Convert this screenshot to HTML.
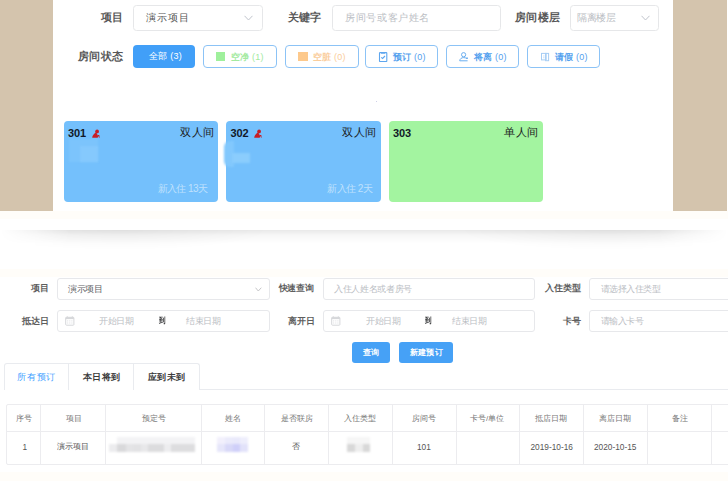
<!DOCTYPE html>
<html><head><meta charset="utf-8">
<style>
*{box-sizing:border-box;margin:0;padding:0}
html,body{width:728px;height:487px;overflow:hidden;background:#fff;font-family:"Liberation Sans",sans-serif;position:relative}
.a{position:absolute}
.t{position:absolute;white-space:nowrap;line-height:1}
</style></head><body>
<div class="a" style="left:0px;top:0px;width:53px;height:211px;background:#d4c4ad"></div>
<div class="a" style="left:673px;top:0px;width:54px;height:211px;background:#d4c4ad"></div>
<div class="a" style="left:0px;top:211px;width:728px;height:8px;background:#fffdf9"></div>
<div class="a" style="left:0px;top:230px;width:728px;height:26px;background:radial-gradient(ellipse 150px 20px at 120px 0, rgba(0,0,0,0.045), rgba(0,0,0,0)), radial-gradient(ellipse 150px 20px at 608px 0, rgba(0,0,0,0.045), rgba(0,0,0,0)), linear-gradient(rgba(0,0,0,0.085), rgba(0,0,0,0.035) 5px, rgba(0,0,0,0) 13px);-webkit-mask-image:linear-gradient(to right, transparent 0, #000 70px, #000 658px, transparent 728px)"></div>
<div class="a" style="left:0px;top:269px;width:728px;height:8px;background:#fffdf9"></div>
<div class="a" style="left:0px;top:472px;width:728px;height:9px;background:#fffdf9"></div>
<div class="t" style="left:100.5px;top:12px;font-size:11px;color:#585858;font-weight:bold;letter-spacing:0.6px">项目</div>
<div class="a" style="left:133px;top:5px;width:130px;height:26px;background:#fff;border:1px solid #e6e7e9;border-radius:3.5px"></div>
<div class="t" style="left:146px;top:13px;font-size:10px;color:#555;letter-spacing:0.85px">演示项目</div>
<svg class="a" style="left:244px;top:15px" width="9" height="6" viewBox="0 0 9 6"><path d="M0.5 0.8 L4.5 5 L8.5 0.8" fill="none" stroke="#c0c4cc" stroke-width="1"/></svg>
<div class="t" style="left:288px;top:12px;font-size:11px;color:#585858;font-weight:bold;letter-spacing:0.2px">关键字</div>
<div class="a" style="left:332px;top:5px;width:169px;height:26px;background:#fff;border:1px solid #e6e7e9;border-radius:3.5px"></div>
<div class="t" style="left:345px;top:13px;font-size:10px;color:#bbbec4;letter-spacing:0.64px">房间号或客户姓名</div>
<div class="t" style="left:515px;top:12px;font-size:11px;color:#585858;font-weight:bold;letter-spacing:0.3px">房间楼层</div>
<div class="a" style="left:570px;top:5px;width:89px;height:26px;background:#fff;border:1px solid #e6e7e9;border-radius:3.5px"></div>
<div class="t" style="left:577px;top:13px;font-size:10px;color:#bbbec4;letter-spacing:-0.3px">隔离楼层</div>
<svg class="a" style="left:641px;top:15px" width="9" height="6" viewBox="0 0 9 6"><path d="M0.5 0.8 L4.5 5 L8.5 0.8" fill="none" stroke="#c0c4cc" stroke-width="1"/></svg>
<div class="t" style="left:78px;top:51px;font-size:11px;color:#585858;font-weight:bold;letter-spacing:0.43px">房间状态</div>
<div class="a" style="left:133px;top:45px;width:62px;height:23px;background:#419ff8;border-radius:4px"></div>
<div class="t" style="left:149px;top:52px;font-size:9px;color:#fff;letter-spacing:0.25px">全部 (3)</div>
<div class="a" style="left:203px;top:45px;width:74px;height:23px;background:#fff;border:1.3px solid #8cc3f6;border-radius:4px"></div>
<div class="a" style="left:216px;top:52px;width:9px;height:9px;background:#9ff09c"></div>
<div class="t" style="left:231px;top:52.5px;font-size:9px;color:#a3eaa0;font-weight:bold;letter-spacing:0.2px">空净 <span style="font-weight:normal">(1)</span></div>
<div class="a" style="left:285px;top:45px;width:74px;height:23px;background:#fff;border:1.3px solid #8cc3f6;border-radius:4px"></div>
<div class="a" style="left:297.5px;top:52px;width:10px;height:9px;background:#fdc98c"></div>
<div class="t" style="left:313px;top:52.5px;font-size:9px;color:#facd9c;font-weight:bold;letter-spacing:0.2px">空脏 <span style="font-weight:normal">(0)</span></div>
<div class="a" style="left:365px;top:45px;width:73px;height:23px;background:#fff;border:1.3px solid #8cc3f6;border-radius:4px"></div>
<svg class="a" style="left:378px;top:51px" width="10" height="11" viewBox="0 0 10 11"><rect x="1.5" y="1.6" width="7.3" height="8.9" rx="0.6" fill="none" stroke="#5ea6ee" stroke-width="1.1"/><rect x="3" y="1" width="4.2" height="1.7" fill="#5ea6ee"/><path d="M3.2 6.3 L4.6 7.5 L7 5" fill="none" stroke="#5ea6ee" stroke-width="1.1"/></svg>
<div class="t" style="left:393px;top:52.5px;font-size:9px;color:#55a1ee;font-weight:bold;letter-spacing:0.2px">预订 <span style="font-weight:normal">(0)</span></div>
<div class="a" style="left:446px;top:45px;width:73px;height:23px;background:#fff;border:1.3px solid #8cc3f6;border-radius:4px"></div>
<svg class="a" style="left:458px;top:51px" width="11" height="11" viewBox="0 0 11 11"><circle cx="5.6" cy="3.7" r="2.1" fill="none" stroke="#6aaef0" stroke-width="1"/><path d="M1.7 9.8 C1.9 7.8 3.5 6.6 5.6 6.6 C7 6.6 8 7 8.6 7.4 M1.7 9.8 H9.6" fill="none" stroke="#6aaef0" stroke-width="1"/><rect x="8" y="6.6" width="2" height="1.2" fill="#5ea6ee"/></svg>
<div class="t" style="left:474px;top:52.5px;font-size:9px;color:#55a1ee;font-weight:bold;letter-spacing:0.2px">将离 <span style="font-weight:normal">(0)</span></div>
<div class="a" style="left:527px;top:45px;width:73px;height:23px;background:#fff;border:1.3px solid #8cc3f6;border-radius:4px"></div>
<svg class="a" style="left:540px;top:52px" width="10" height="10" viewBox="0 0 10 10"><rect x="1.5" y="1.4" width="4.6" height="6.5" fill="none" stroke="#a6cdf4" stroke-width="1"/><rect x="5.6" y="1.4" width="3" height="7.3" fill="none" stroke="#a6cdf4" stroke-width="1"/><path d="M3 4 H4.6 M3 5.8 H4.6" stroke="#c8e0f8" stroke-width="0.9"/></svg>
<div class="t" style="left:555px;top:52.5px;font-size:9px;color:#55a1ee;font-weight:bold;letter-spacing:0.2px">请假 <span style="font-weight:normal">(0)</span></div>
<div class="a" style="left:376px;top:101px;width:1px;height:1px;background:#d0d0e8"></div>
<div class="a" style="left:64px;top:120.5px;width:154px;height:81.3px;background:#74c0fc;border-radius:4px"></div>
<div class="a" style="left:69px;top:139px;width:29px;height:23px;background:#7cc4fc;filter:blur(1.2px)"></div>
<div class="a" style="left:80px;top:146px;width:18px;height:16px;background:#85c9fd;filter:blur(1.2px)"></div>
<div class="t" style="left:68px;top:128px;font-size:11px;color:#111827;font-weight:bold;letter-spacing:-0.15px">301</div>
<svg class="a" style="left:92px;top:129px" width="9" height="10" viewBox="0 0 9 10"><circle cx="5.1" cy="2.4" r="1.9" fill="#c71d24"/><path d="M3.6 3.6 C2.2 4.6 0.3 6.6 0.2 8.8 L5.6 8.8 C6 8 6.3 7.3 6.8 7 L6.9 8.7 L7.6 8.7 L7.4 6.3 C6.7 5.9 6 6 5.4 6.5 C5.6 5.3 5 4.2 3.6 3.6 Z" fill="#c71d24"/></svg>
<div class="t" style="left:180px;top:127px;font-size:11px;color:#1a1a1a;letter-spacing:0.7px">双人间</div>
<div class="t" style="left:157.5px;top:184px;font-size:10px;color:#bfe0fd;letter-spacing:-0.58px">新入住 13天</div>
<div class="a" style="left:226px;top:120.5px;width:155px;height:81.3px;background:#74c0fc;border-radius:4px"></div>
<div class="a" style="left:223.5px;top:141px;width:10px;height:26px;background:#82c8fd;filter:blur(1px);border-radius:6px 0 0 6px"></div>
<div class="a" style="left:232px;top:153px;width:18px;height:10px;background:#8bcdfd;filter:blur(0.8px)"></div>
<div class="t" style="left:230.5px;top:128px;font-size:11px;color:#111827;font-weight:bold;letter-spacing:-0.15px">302</div>
<svg class="a" style="left:254px;top:129px" width="9" height="10" viewBox="0 0 9 10"><circle cx="5.1" cy="2.4" r="1.9" fill="#c71d24"/><path d="M3.6 3.6 C2.2 4.6 0.3 6.6 0.2 8.8 L5.6 8.8 C6 8 6.3 7.3 6.8 7 L6.9 8.7 L7.6 8.7 L7.4 6.3 C6.7 5.9 6 6 5.4 6.5 C5.6 5.3 5 4.2 3.6 3.6 Z" fill="#c71d24"/></svg>
<div class="t" style="left:342px;top:127px;font-size:11px;color:#1a1a1a;letter-spacing:0.7px">双人间</div>
<div class="t" style="left:327px;top:184px;font-size:10px;color:#bfe0fd;letter-spacing:-0.5px">新入住 2天</div>
<div class="a" style="left:389px;top:120.5px;width:154px;height:81.4px;background:#a3f4a0;border-radius:4px"></div>
<div class="t" style="left:393px;top:128px;font-size:11px;color:#111827;font-weight:bold;letter-spacing:-0.15px">303</div>
<div class="t" style="left:504px;top:127px;font-size:11px;color:#1a1a1a;letter-spacing:0.7px">单人间</div>
<div class="t" style="left:30.5px;top:284px;font-size:9px;color:#5e5e5e;font-weight:bold;letter-spacing:0.4px">项目</div>
<div class="a" style="left:57px;top:278px;width:213px;height:22px;background:#fff;border:1px solid #e7e8eb;border-radius:3px"></div>
<div class="t" style="left:68px;top:284.5px;font-size:9px;color:#606266;letter-spacing:-0.27px">演示项目</div>
<svg class="a" style="left:254.5px;top:286.5px" width="7" height="5" viewBox="0 0 7 5"><path d="M0.5 0.7 L3.3 4 L6.3 0.7" fill="none" stroke="#bfbfc2" stroke-width="0.9"/></svg>
<div class="t" style="left:278.5px;top:284px;font-size:9px;color:#5e5e5e;font-weight:bold;letter-spacing:-0.23px">快速查询</div>
<div class="a" style="left:323px;top:278px;width:212px;height:22px;background:#fff;border:1px solid #e7e8eb;border-radius:3px"></div>
<div class="t" style="left:334px;top:284.5px;font-size:9px;color:#bbbec4;letter-spacing:-0.32px">入住人姓名或者房号</div>
<div class="t" style="left:544.5px;top:284px;font-size:9px;color:#5e5e5e;font-weight:bold;letter-spacing:0.1px">入住类型</div>
<div class="a" style="left:589px;top:278px;width:150px;height:22px;background:#fff;border:1px solid #e7e8eb;border-radius:3px"></div>
<div class="t" style="left:601px;top:284.5px;font-size:9px;color:#bbbec4;letter-spacing:-0.57px">请选择入住类型</div>
<div class="t" style="left:21.5px;top:317px;font-size:9px;color:#5e5e5e;font-weight:bold;letter-spacing:0.35px">抵达日</div>
<div class="a" style="left:57px;top:310px;width:213px;height:22px;background:#fff;border:1px solid #e7e8eb;border-radius:3px"></div>
<svg class="a" style="left:64.6px;top:316px" width="10" height="10" viewBox="0 0 10 10"><rect x="0.7" y="1.3" width="8.2" height="7.9" rx="0.7" fill="none" stroke="#d6d7da" stroke-width="1"/><rect x="0.7" y="1.3" width="8.2" height="1.8" fill="#d6d7da"/><path d="M2.3 0.3 V2 M7.3 0.3 V2" stroke="#d6d7da" stroke-width="1"/><path d="M2.2 4.9 H3.2 M4.3 4.9 H5.3 M6.4 4.9 H7.4 M2.2 7 H3.2 M4.3 7 H5.3 M6.4 7 H7.4" stroke="#dcdde0" stroke-width="1"/></svg>
<div class="t" style="left:99px;top:317px;font-size:9px;color:#bbbec4;letter-spacing:-0.45px">开始日期</div>
<div class="t" style="left:158.5px;top:317px;font-size:8px;color:#303133;font-weight:bold;transform:scaleX(0.82);transform-origin:0 0">到</div>
<div class="t" style="left:186px;top:317px;font-size:9px;color:#bbbec4;letter-spacing:-0.45px">结束日期</div>
<div class="t" style="left:287.5px;top:317px;font-size:9px;color:#5e5e5e;font-weight:bold;letter-spacing:0.35px">离开日</div>
<div class="a" style="left:323px;top:310px;width:212px;height:22px;background:#fff;border:1px solid #e7e8eb;border-radius:3px"></div>
<svg class="a" style="left:330.6px;top:316px" width="10" height="10" viewBox="0 0 10 10"><rect x="0.7" y="1.3" width="8.2" height="7.9" rx="0.7" fill="none" stroke="#d6d7da" stroke-width="1"/><rect x="0.7" y="1.3" width="8.2" height="1.8" fill="#d6d7da"/><path d="M2.3 0.3 V2 M7.3 0.3 V2" stroke="#d6d7da" stroke-width="1"/><path d="M2.2 4.9 H3.2 M4.3 4.9 H5.3 M6.4 4.9 H7.4 M2.2 7 H3.2 M4.3 7 H5.3 M6.4 7 H7.4" stroke="#dcdde0" stroke-width="1"/></svg>
<div class="t" style="left:366px;top:317px;font-size:9px;color:#bbbec4;letter-spacing:-0.45px">开始日期</div>
<div class="t" style="left:425px;top:317px;font-size:8px;color:#303133;font-weight:bold;transform:scaleX(0.82);transform-origin:0 0">到</div>
<div class="t" style="left:452px;top:317px;font-size:9px;color:#bbbec4;letter-spacing:-0.45px">结束日期</div>
<div class="t" style="left:563px;top:317px;font-size:9px;color:#5e5e5e;font-weight:bold;letter-spacing:0.3px">卡号</div>
<div class="a" style="left:589px;top:310px;width:150px;height:22px;background:#fff;border:1px solid #e7e8eb;border-radius:3px"></div>
<div class="t" style="left:601px;top:317px;font-size:9px;color:#bbbec4;letter-spacing:-0.62px">请输入卡号</div>
<div class="a" style="left:352px;top:342px;width:38px;height:21px;background:#46a1f6;border-radius:3px"></div>
<div class="t" style="left:363px;top:349px;font-size:8px;color:#fff;font-weight:bold">查询</div>
<div class="a" style="left:399px;top:342px;width:54px;height:21px;background:#46a1f6;border-radius:3px"></div>
<div class="t" style="left:410px;top:349px;font-size:8px;color:#fff;font-weight:bold;letter-spacing:0.23px">新建预订</div>
<div class="a" style="left:4px;top:389px;width:724px;height:1px;background:#e9ebef"></div>
<div class="a" style="left:4px;top:363px;width:196px;height:27px;background:#fff;border:1px solid #e9ebef;border-bottom:none;border-radius:3px 3px 0 0"></div>
<div class="a" style="left:68px;top:363px;width:1px;height:27px;background:#e9ebef"></div>
<div class="a" style="left:133px;top:363px;width:1px;height:27px;background:#e9ebef"></div>
<div class="a" style="left:5px;top:389px;width:63px;height:1px;background:#fff"></div>
<div class="t" style="left:17px;top:373px;font-size:9px;color:#409eff;letter-spacing:0.75px">所有预订</div>
<div class="t" style="left:82.5px;top:373px;font-size:9px;color:#3c3c3c;font-weight:bold;letter-spacing:0.63px">本日将到</div>
<div class="t" style="left:147.5px;top:373px;font-size:9px;color:#3c3c3c;font-weight:bold;letter-spacing:0.63px">应到未到</div>
<div class="a" style="left:6px;top:404px;width:730px;height:61px;background:transparent;border:1px solid #ececef;border-radius:2px"></div>
<div class="a" style="left:6px;top:431px;width:730px;height:1px;background:#ececef"></div>
<div class="a" style="left:40px;top:405px;width:1px;height:59px;background:#ececef"></div>
<div class="a" style="left:105px;top:405px;width:1px;height:59px;background:#ececef"></div>
<div class="a" style="left:201px;top:405px;width:1px;height:59px;background:#ececef"></div>
<div class="a" style="left:264px;top:405px;width:1px;height:59px;background:#ececef"></div>
<div class="a" style="left:328px;top:405px;width:1px;height:59px;background:#ececef"></div>
<div class="a" style="left:392px;top:405px;width:1px;height:59px;background:#ececef"></div>
<div class="a" style="left:456px;top:405px;width:1px;height:59px;background:#ececef"></div>
<div class="a" style="left:519px;top:405px;width:1px;height:59px;background:#ececef"></div>
<div class="a" style="left:583px;top:405px;width:1px;height:59px;background:#ececef"></div>
<div class="a" style="left:647px;top:405px;width:1px;height:59px;background:#ececef"></div>
<div class="a" style="left:711px;top:405px;width:1px;height:59px;background:#ececef"></div>
<div class="t" style="left:16px;top:415px;font-size:8px;color:#767676">序号</div>
<div class="t" style="left:66px;top:415px;font-size:8px;color:#767676">项目</div>
<div class="t" style="left:142px;top:415px;font-size:8px;color:#767676">预定号</div>
<div class="t" style="left:225px;top:415px;font-size:8px;color:#767676">姓名</div>
<div class="t" style="left:281px;top:415px;font-size:8px;color:#767676">是否联房</div>
<div class="t" style="left:344px;top:415px;font-size:8px;color:#767676">入住类型</div>
<div class="t" style="left:412px;top:415px;font-size:8px;color:#767676">房间号</div>
<div class="t" style="left:470px;top:415px;font-size:8px;color:#767676">卡号/单位</div>
<div class="t" style="left:535px;top:415px;font-size:8px;color:#767676">抵店日期</div>
<div class="t" style="left:599px;top:415px;font-size:8px;color:#767676">离店日期</div>
<div class="t" style="left:672px;top:415px;font-size:8px;color:#767676">备注</div>
<div class="t" style="left:22.5px;top:443px;font-size:8.3px;color:#555555">1</div>
<div class="t" style="left:57px;top:443px;font-size:8px;color:#555555">演示项目</div>
<div class="t" style="left:292px;top:443px;font-size:8px;color:#555555">否</div>
<div class="t" style="left:417px;top:443px;font-size:8.3px;color:#555555">101</div>
<div class="t" style="left:530.5px;top:443px;font-size:8.3px;color:#555555">2019-10-16</div>
<div class="t" style="left:594px;top:443px;font-size:8.3px;color:#555555">2020-10-15</div>
<div class="a" style="filter:blur(0.8px);left:0;top:0;width:728px;height:487px">
<div class="a" style="left:117px;top:437px;width:78px;height:7px;background:#f3f3f5"></div>
<div class="a" style="left:109px;top:444px;width:8px;height:8px;background:#ececee"></div>
<div class="a" style="left:117px;top:444px;width:9px;height:8px;background:#d9d9db"></div>
<div class="a" style="left:126px;top:444px;width:7px;height:8px;background:#e4e4e6"></div>
<div class="a" style="left:133px;top:444px;width:8px;height:8px;background:#e2e2e4"></div>
<div class="a" style="left:141px;top:444px;width:7px;height:8px;background:#e8e8ea"></div>
<div class="a" style="left:148px;top:444px;width:16px;height:8px;background:#dcdcde"></div>
<div class="a" style="left:164px;top:444px;width:7px;height:8px;background:#ededef"></div>
<div class="a" style="left:171px;top:444px;width:24px;height:8px;background:#dddddf"></div>
<div class="a" style="left:217px;top:437px;width:8px;height:7px;background:#f2f0fc"></div>
<div class="a" style="left:217px;top:444px;width:8px;height:8px;background:#e6e6fa"></div>
<div class="a" style="left:225px;top:437px;width:8px;height:7px;background:#ebebfb"></div>
<div class="a" style="left:225px;top:444px;width:8px;height:8px;background:#d8d8f8"></div>
<div class="a" style="left:233px;top:437px;width:7px;height:7px;background:#e9e9fb"></div>
<div class="a" style="left:233px;top:444px;width:7px;height:8px;background:#cfcff9"></div>
<div class="a" style="left:240px;top:437px;width:8px;height:7px;background:#eeeefc"></div>
<div class="a" style="left:240px;top:444px;width:8px;height:8px;background:#e2e2fa"></div>
<div class="a" style="left:347px;top:437px;width:23px;height:7px;background:#f6f6f6"></div>
<div class="a" style="left:347px;top:444px;width:8px;height:8px;background:#d8d8d8"></div>
<div class="a" style="left:355px;top:444px;width:8px;height:8px;background:#eeeeee"></div>
<div class="a" style="left:363px;top:444px;width:7px;height:8px;background:#d8d8d8"></div>
</div>
</body></html>
